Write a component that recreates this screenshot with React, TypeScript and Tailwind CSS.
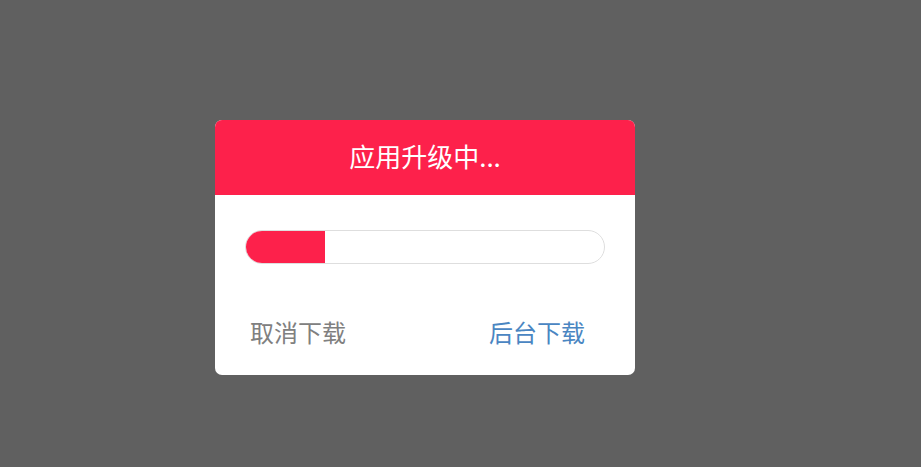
export default function App() {
  const progress = 22;
  return (
    <div className="w-[921px] h-[467px] bg-[#606060] pl-[215px] pt-[120px]" style={{ fontFamily: '"Noto Sans CJK SC", "Noto Sans", sans-serif' }}>
      <div className="w-[420px] h-[255px] bg-white rounded-[7px] overflow-hidden flex flex-col">
        {/* Header */}
        <div className="h-[75px] bg-[#fd214b] flex items-center justify-center pb-[4px] text-white text-[26px]">
          应用升级中...
        </div>

        {/* Progress */}
        <div className="px-[30px] pt-[35px]">
          <div className="h-[34px] rounded-full border border-[#dedede] overflow-hidden">
            <div className="h-full bg-[#fd214b]" style={{ width: `${progress}%` }} />
          </div>
        </div>

        {/* Actions */}
        <div className="flex-1 flex items-center justify-between pl-[35px] pr-[50px] pt-[24px] text-[24px]">
          <button className="text-[#808080]">取消下载</button>
          <button className="text-[#4a86c2]">后台下载</button>
        </div>
      </div>
    </div>
  );
}
